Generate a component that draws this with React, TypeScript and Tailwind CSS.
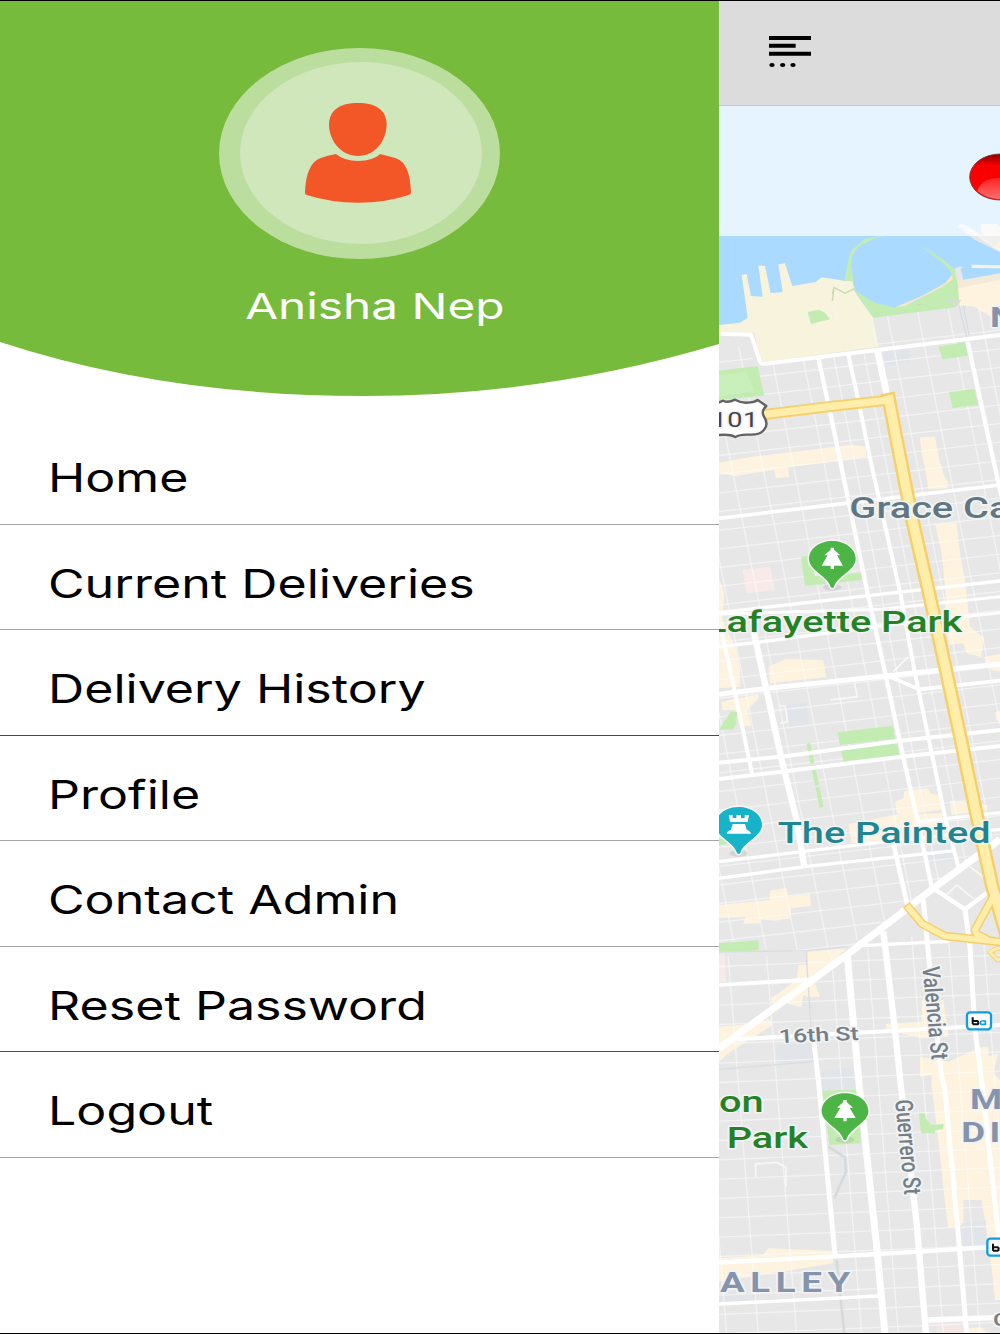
import React from "react";

const menuItems = [
  { name: "Home", row: "h-[106px] border-[#a6a6a6]" },
  { name: "Current Deliveries", row: "h-[105px] border-[#a6a6a6]" },
  { name: "Delivery History", row: "h-[106px] border-[#4a4a4a]" },
  { name: "Profile", row: "h-[105px] border-[#a6a6a6]" },
  { name: "Contact Admin", row: "h-[106px] border-[#a6a6a6]" },
  { name: "Reset Password", row: "h-[105px] border-[#4a4a4a]" },
  { name: "Logout", row: "h-[106px] border-[#a6a6a6]" },
];

// The map is drawn at 3 units per pixel.
const commercial = [
  "725,195 760,185 830,172 855,165 855,262 735,258",
  "765,252 855,255 855,280 830,292",
  "12,728 100,712 350,682 412,674 453,680 453,710 370,722 220,742 222,772 182,775 178,750 60,768 12,758",
  "615,652 660,650 672,715 685,760 700,790 698,805 640,808 630,740 620,700",
  "660,912 725,908 735,1000 750,1080 765,1220 808,1255 798,1312 755,1300 745,1270 700,1275 690,1100 680,1000",
  "808,1310 855,1302 855,1355 830,1350 812,1335",
  "840,1475 855,1472 855,1508 845,1500",
  "12,1075 28,1120 22,1200 65,1290 75,1350 75,1400 12,1405",
  "160,1340 210,1318 325,1320 333,1372 165,1390",
  "20,1445 132,1423 130,1435 98,1470 110,1518 75,1520 60,1470 22,1470",
  "540,1745 565,1735 568,1712 640,1705 645,1720 672,1725 678,1770 600,1780 590,1800 545,1780",
  "400,1812 540,1785 690,1778 690,1815 560,1860 410,1870",
  "705,1742 780,1750 818,1755 815,1770 710,1785",
  "12,2055 165,2040 165,2012 215,2003 218,2028 285,2022 288,2058 228,2065 228,2095 180,2102 135,2098 135,2110 85,2112 90,2090 12,2095",
  "278,2195 395,2185 310,2270 300,2290 315,2330 280,2332 265,2325 258,2362 215,2350 170,2350 168,2335 245,2280 250,2235 278,2235",
  "12,2420 75,2415 165,2398 172,2415 40,2500 12,2525",
  "620,2340 685,2340 700,2450 620,2455",
  "512,2412 620,2405 620,2455 515,2430",
  "615,2510 700,2525 800,2480 820,2480 820,2510 850,2500 835,2560 855,2580 855,3240 840,3240 825,3100 800,2940 745,2940 745,3015 700,3025 690,2950 670,2760 650,2600 650,2565 615,2570",
  "12,3115 145,3105 160,3085 350,3092 355,3130 12,3185",
  "760,3325 800,3322 820,3342 760,3342",
];

const parks = [
  "278,276 312,269 330,278 345,298 288,312",
  "12,452 128,438 148,527 12,540",
  "670,380 750,367 758,407 683,418",
  "702,516 778,506 790,555 713,564",
  "258,1010 285,1007 300,1068 438,1058 440,1080 270,1098",
  "48,1475 67,1475 64,1510 55,1528 12,1530 28,1503",
  "368,1537 533,1517 541,1556 375,1575",
  "378,1591 547,1570 554,1605 386,1624",
  "12,1855 35,1855 35,1872 12,1875",
  "12,2170 130,2161 132,2191 12,2197",
  "322,2612 437,2608 437,2770 343,2775",
  "612,2680 628,2680 635,2700 650,2715 686,2712 684,2728 660,2730 660,2740 618,2740",
];

const blocks = [
  { points: "82,1050 165,1040 180,1110 95,1120", fill: "#f9eaea" },
  { points: "12,2205 28,2200 33,2285 12,2287", fill: "#f9eaea" },
  { points: "665,3312 745,3308 745,3342 665,3342", fill: "#f5e6e6" },
  { points: "505,395 582,385 588,425 515,437", fill: "#e1e5e9" },
  { points: "215,1455 275,1448 282,1510 225,1525", fill: "#e1e5e9" },
  { points: "635,1880 710,1868 715,1920 645,1935", fill: "#e1e5e9" },
  { points: "182,2475 290,2468 297,2525 185,2530", fill: "#e1e5e9" },
  { points: "320,2550 425,2540 428,2608 320,2612", fill: "#e1e5e9" },
  { points: "740,3010 812,3000 815,3080 740,3085", fill: "#e1e5e9" },
  { points: "12,3220 128,3215 128,3240 12,3248", fill: "#e1e5e9" },
];

const streets = [
  { d: "M12 341L108 344L135 425Q138 433 150 431L855 345", w: 12 },
  { d: "M310 415L345 575L375 720L460 1130L513 1370L560 1590L605 1790L650 2000", w: 13 },
  { d: "M400 405L432 550L465 715L558 1130L600 1360L690 1790L730 1940", w: 12 },
  { d: "M487 390L517 530", w: 20 },
  { d: "M758 365L835 720L860 830", w: 13 },
  { d: "M12 895L390 850L855 795", w: 11 },
  { d: "M12 1178L460 1127L855 1083", w: 10 },
  { d: "M12 1182L500 1168L855 1130", w: 9 },
  { d: "M12 1280L120 1268L480 1220L855 1178", w: 10 },
  { d: "M12 1423L160 1405L510 1368L855 1332", w: 15 },
  { d: "M520 1368L612 1408L855 1382", w: 11 },
  { d: "M12 1628L200 1610L550 1563L855 1530", w: 12 },
  { d: "M12 1677L200 1655L560 1610L855 1578", w: 12 },
  { d: "M610 1805L855 1778", w: 10 },
  { d: "M12 1925L260 1895L540 1862L855 1828", w: 10 },
  { d: "M12 1975L270 1940L720 1892", w: 10 },
  { d: "M115 1230L150 1390L200 1620L245 1800L268 1940", w: 19 },
  { d: "M15 1215L50 1370L112 1665", w: 12 },
  { d: "M535 1870L578 2060", w: 14 },
  { d: "M12 2485L395 2205L560 2078L655 2005L855 1858", w: 21 },
  { d: "M655 2005L750 2068L830 2008", w: 13 },
  { d: "M750 2068L765 2180L780 2430L800 2580L852 3060", w: 15 },
  { d: "M625 2040L640 2200L680 2570L690 2610L732 3070L755 3342", w: 15 },
  { d: "M505 2135L540 2430L562 2640L605 3010L633 3342", w: 19 },
  { d: "M397 2210L432 2590L485 3080L510 3342", w: 21 },
  { d: "M297 2470L312 2600L360 3105", w: 15 },
  { d: "M440 2177L700 2164", w: 10 },
  { d: "M12 2295L285 2278", w: 11 },
  { d: "M60 2458L430 2438L855 2415", w: 12 },
  { d: "M12 3128L490 3102L855 3080", w: 13 },
  { d: "M12 3252L490 3228", w: 10 },
  { d: "M640 3300L855 3292", w: 16 },
];

const highways = [
  { d: "M145 584L340 560L522 540", w: 33 },
  { d: "M522 540L545 660L590 890L640 1110L695 1360L740 1570L790 1810L832 2000L870 2130", w: 43 },
  { d: "M835 2030L780 2130L785 2142L810 2155", w: 26 },
  { d: "M582 2064L622 2112L690 2148L860 2166", w: 26 },
  { d: "M855 2184L840 2188L824 2196L848 2220L858 2216", w: 14 },
];

const northRows = Array.from({ length: 38 }, (_, i) => 330 + i * 56);
const northColumns = Array.from({ length: 14 }, (_, i) => -420 + i * 93);
const southRows = Array.from({ length: 20 }, (_, i) => 2240 + i * 58);
const southColumns = [-60, 35, 150, 345, 455, 590, 700, 805];

interface MapLabelProps {
  x: number;
  y: number;
  text: string;
  fill: string;
  size?: number;
  weight?: number;
  angle?: number;
  spacing?: number;
  stretch?: number;
  anchor?: "start" | "end";
}

const MapLabel = ({
  x,
  y,
  text,
  fill,
  size = 91,
  weight = 500,
  angle = 0,
  spacing = 0,
  stretch = 1.31,
  anchor = "start",
}: MapLabelProps) => (
  <text
    transform={`translate(${x} ${y}) scale(${stretch} 1) rotate(${angle})`}
    fontFamily='Roboto, "Liberation Sans", sans-serif'
    fontSize={size}
    fontWeight={weight}
    letterSpacing={spacing}
    textAnchor={anchor}
    fill={fill}
    stroke="#f3f3f3"
    strokeWidth={9}
    strokeLinejoin="round"
    paintOrder="stroke"
  >
    {text}
  </text>
);

const MapPin = ({ x, y, color, children }: { x: number; y: number; color: string; children: React.ReactNode }) => (
  <g transform={`translate(${x} ${y})`}>
    <ellipse cx="0" cy="87" rx="28" ry="10" fill="#000" opacity="0.08" />
    <path
      d="M0 -52C39 -52 70 -28 70 1C70 37 14 52 5 86Q0 92 -5 86C-14 52 -70 37 -70 1C-70 -28 -39 -52 0 -52Z"
      fill={color}
      stroke="#f6f6f6"
      strokeWidth="9"
      paintOrder="stroke"
    />
    {children}
  </g>
);

const Tree = () => <path d="M-5 -32H5V-26L24 -9H14L32 22H5V32H-5V22H-32L-14 -9H-24L-5 -26Z" fill="#fff" />;

const Rook = () => (
  <path
    d="M-30 -28H-18V-19H-7V-28H7V-19H18V-28H31L27 -7H-26ZM-18 -1H19L24 16Q36 20 37 28H-36Q-34 19 -23 16Z"
    fill="#fff"
  />
);

const TransitStop = ({ x, y }: { x: number; y: number }) => (
  <g transform={`translate(${x} ${y})`}>
    <rect x="0" y="0" width="72" height="51" rx="9" fill="#fff" stroke="#0f9ee0" strokeWidth="7" />
    <path d="M17 15V36M17 26H30Q34 26 34 31Q34 36 30 36H17" fill="none" stroke="#111" strokeWidth="6" />
    <path d="M55 26H44Q40 26 40 31Q40 36 44 36H55V24" fill="none" stroke="#0f9ee0" strokeWidth="5" />
  </g>
);

const CityMap = () => (
  <svg className="block h-[1228px] w-[281px]" viewBox="12 -342 843 3684">
    <defs>
      <clipPath id="north">
        <path d="M12 335L135 432L480 395L475 285L855 255V1870L395 2205L12 2180Z" />
      </clipPath>
      <clipPath id="south">
        <path d="M12 2210L395 2205L655 2020L855 2150V3342H12Z" />
      </clipPath>
    </defs>
    <rect x="12" y="-342" width="843" height="3684" fill="#e7e7e7" />

    {commercial.map((points) => (
      <polygon key={points} points={points} fill="#fdf3df" />
    ))}
    {blocks.map((block) => (
      <polygon key={block.points} points={block.points} fill={block.fill} />
    ))}

    <g clipPath="url(#north)" stroke="#fff" strokeOpacity="0.5" strokeWidth="4">
      {northRows.map((y) => (
        <line key={y} x1="0" y1={y + 98} x2="860" y2={y} />
      ))}
      {northColumns.map((x) => (
        <line key={x} x1={x} y1="250" x2={x + 400} y2="2250" />
      ))}
    </g>
    <g clipPath="url(#south)" stroke="#fff" strokeOpacity="0.5" strokeWidth="4">
      {southRows.map((y) => (
        <line key={y} x1="0" y1={y} x2="860" y2={y - 35} />
      ))}
      {southColumns.map((x) => (
        <line key={x} x1={x} y1="2150" x2={x + 95} y2="3342" />
      ))}
    </g>

    {/* bay and waterfront */}
    <path
      d="M12 -342H855V96L800 55L738 12L728 20L780 60L855 96V165L745 181L735 138L718 148L725 230L480 290L12 330Z"
      fill="#aadaff"
    />
    <path d="M740 12L760 20L855 80V96L790 52L735 18Z" fill="#f2f2f2" />
    <path d="M798 12H845L855 22V92L800 48Z" fill="#efefef" />
    <path d="M832 82L855 62V94Z" fill="#fdf3df" />
    <path d="M770 134L855 136V145L785 144H770Z" fill="#f8f3e4" />
    <path d="M718 148L745 138L735 150L743 190L725 195Z" fill="#e7e7e7" />
    <path d="M728 182L855 160V180L728 205Z" fill="#f3ead8" />
    <path
      d="M12 315L75 308L98 293L80 165L95 162L108 228L143 230L130 137L150 137L167 219L203 216L190 133L210 130L232 198L302 186L320 172L388 182L413 184L420 215L440 245L470 285L490 380L150 425L135 422L118 338L12 335Z"
      fill="#f8f3dc"
    />
    <path d="M388 182L400 120L410 90L450 56L515 44L480 55L430 80L413 105L408 130L415 184Z" fill="#c3ecb2" />
    <path
      d="M613 74L690 122L718 146L728 190L733 250L720 262L475 293L420 215L413 185L425 215L480 248L540 263L600 245L690 190L712 165L700 145L685 130Z"
      fill="#c3ecb2"
    />
    <path d="M540 262L620 228L690 190L711 165L714 178L680 202L570 258Z" fill="#f7e8c6" />
    <path d="M352 243L357 202L390 220L418 206M352 222L357 202M606 256L618 252" fill="none" stroke="#c5dbb0" strokeWidth="4" />
    <path d="M470 290L486 380M355 255L370 300" fill="none" stroke="#f5f5ea" strokeWidth="7" />
    <path d="M695 240L735 242L722 255ZM732 258L755 350M745 255L762 345" fill="none" stroke="#d8dbdf" strokeWidth="4" />

    {parks.map((points) => (
      <polygon key={points} points={points} fill="#c3ecb2" />
    ))}
    <path d="M12 465L95 456L118 512L12 530Z" fill="#c9efba" />
    <path d="M280 1570L321 1767" stroke="#c3ecb2" strokeWidth="12" strokeDasharray="62 5" />

    <g fill="none" stroke="#f8f8f8" strokeWidth="5">
      <path d="M535 1355L580 1310M193 1458H210L218 1505L195 1510M418 1388L427 1430L345 1440M765 1940L830 1990M690 2030L725 1995L775 2035M122 2872V2832L185 2827L213 2842V2900" />
    </g>
    <path d="M12 2196L275 2192L395 2180M273 2195L295 2525M12 2548L297 2525" fill="none" stroke="#dadde0" strokeWidth="4" />
    <path d="M340 2780L390 2812L393 2855L358 2935M365 3120L388 3342" fill="none" stroke="#d7dadd" strokeWidth="8" />

    <g fill="none" stroke="#fff" strokeLinejoin="round">
      {streets.map((street) => (
        <path key={street.d} d={street.d} strokeWidth={street.w} />
      ))}
    </g>
    <g fill="none" stroke="#f6cf6b" strokeLinejoin="round" strokeLinecap="square">
      {highways.map((road) => (
        <path key={road.d} d={road.d} strokeWidth={road.w} />
      ))}
    </g>
    <g fill="none" stroke="#ffeeaa" strokeLinejoin="round" strokeLinecap="square">
      {highways.map((road) => (
        <path key={road.d} d={road.d} strokeWidth={road.w * 0.66} />
      ))}
    </g>

    {/* route shield */}
    <path
      d="M-20 552L12 547L25 542Q38 550 60 539Q80 550 100 548Q118 547 128 540L154 558Q138 572 146 588Q162 612 148 628Q136 645 105 644Q75 642 61 651Q45 642 12 645L-20 640Z"
      fill="#fff"
      stroke="#626262"
      strokeWidth="7"
      strokeLinejoin="round"
    />
    <MapLabel x={132} y={620} text="101" fill="#444" size={62} weight={400} spacing={1.5} anchor="end" />

    <MapLabel x={825} y={320} text="N" fill="#8494ad" size={84} weight={700} />
    <MapLabel x={403} y={895} text="Grace Ca" fill="#5f7784" />
    <MapLabel x={742} y={1235} text="Lafayette Park" fill="#248226" anchor="end" />
    <MapLabel x={188} y={1868} text="The Painted" fill="#1f8690" />
    <MapLabel x={193} y={2469} text="16th St" fill="#727f88" size={57} angle={-3} />
    <MapLabel x={622} y={2240} text="Valencia St" fill="#727f88" size={56} angle={85.7} />
    <MapLabel x={540} y={2640} text="Guerrero St" fill="#727f88" size={56} angle={85.7} />
    <MapLabel x={12} y={2677} text="on" fill="#248226" />
    <MapLabel x={35} y={2785} text="Park" fill="#248226" />
    <MapLabel x={765} y={2667} text="M" fill="#8494ad" size={84} weight={700} />
    <MapLabel x={739} y={2766} text="DI" fill="#8494ad" size={84} weight={700} spacing={10} />
    <MapLabel x={15} y={3215} text="ALLEY" fill="#8494ad" size={84} weight={700} spacing={13} />
    <MapLabel x={834} y={3317} text="C" fill="#727f88" size={56} />

    <MapPin x={352} y={1015} color="#4db446">
      <Tree />
    </MapPin>
    <MapPin x={390} y={2672} color="#4db446">
      <Tree />
    </MapPin>
    <MapPin x={71} y={1813} color="#16b3c9">
      <Rook />
    </MapPin>
    <TransitStop x={756} y={2377} />
    <TransitStop x={817} y={3056} />
  </svg>
);

const RedButton = () => (
  <svg className="mt-3 h-12 w-8" viewBox="0 0 96 144">
    <defs>
      <linearGradient id="gloss" x1="0" y1="0" x2="0" y2="1">
        <stop offset="0" stopColor="#ff2020" />
        <stop offset="1" stopColor="#ff7070" />
      </linearGradient>
      <linearGradient id="red" x1="0" y1="0" x2="0" y2="1">
        <stop offset="0" stopColor="#8c0000" />
        <stop offset="0.25" stopColor="#f80000" />
        <stop offset="1" stopColor="#ff0000" />
      </linearGradient>
    </defs>
    <ellipse cx="96" cy="72" rx="91" ry="69" fill="url(#red)" stroke="#7a3038" strokeWidth="2.5" />
    <path d="M28 114Q40 74 96 74V139Q55 137 28 114Z" fill="url(#gloss)" />
  </svg>
);

const UserIcon = () => (
  <svg className="mr-[5px] h-[100px] w-[106px]" viewBox="317 219 318 300">
    <path
      d="M476 219C530 219 562 240 562 285C560 335 525 378 476 378C427 378 390 335 389 285C389 240 422 219 476 219Z"
      fill="#f35627"
    />
    <path
      d="M410 372Q435 393 476 393Q520 393 543 372L590 385C620 395 633 430 635 488Q635 492 628 495Q560 518 476 518Q395 518 322 495Q317 493 317 488C319 430 335 395 362 385Q385 376 410 372Z"
      fill="#f35627"
    />
  </svg>
);

const Sidebar = () => (
  <aside className="flex w-[719px] shrink-0 flex-col bg-white">
    <header className="relative h-[418px] shrink-0">
      <svg className="absolute inset-0 h-[396px] w-[719px]" viewBox="0 1 719 396">
        <path d="M0 0H719V344Q545 396 364 396Q165 396 0 342Z" fill="#77bb3c" />
      </svg>
      <div className="relative flex flex-col items-center pt-[47px]">
        <div className="flex h-[211px] w-[281px] items-center justify-center rounded-[50%] bg-[#bbde9e]">
          <div className="mb-[2px] ml-[2px] flex h-[182px] w-[242px] items-center justify-center rounded-[50%] bg-[#d0e7bc]">
            <UserIcon />
          </div>
        </div>
        <p className="ml-[31px] mt-[23px] scale-x-[1.325] whitespace-nowrap text-[36px] leading-[48px] text-white">
          Anisha Nep
        </p>
      </div>
    </header>
    <nav>
      {menuItems.map((item) => (
        <div key={item.name} className={`flex items-center border-b pl-[48px] pt-[13px] ${item.row}`}>
          <span className="origin-left scale-x-[1.285] whitespace-nowrap text-[39px] leading-[48px] text-black">
            {item.name}
          </span>
        </div>
      ))}
    </nav>
  </aside>
);

export default function App() {
  return (
    <div className="flex h-[1334px] w-[1000px] overflow-hidden border-y border-black bg-white font-[Inter,'Liberation_Sans',sans-serif]">
      <Sidebar />
      <main className="flex w-[281px] shrink-0 flex-col">
        <div className="h-[105px] shrink-0 border-b border-[#c3c7ca] bg-[#dcdcdc] pl-[50px] pt-[34px]">
          <svg className="h-8 w-[42px]" viewBox="0 0 126 96">
            <path d="M0 3H126V15H0ZM0 26H80V38H0ZM0 50H126V62H0Z" />
            <ellipse cx="9" cy="90" rx="8" ry="6" />
            <ellipse cx="41" cy="90" rx="8" ry="6" />
            <ellipse cx="72" cy="90" rx="8" ry="6" />
          </svg>
        </div>
        <div className="relative">
          <CityMap />
          <div className="absolute inset-x-0 top-0 flex h-[130px] items-center justify-end bg-white/70">
            <RedButton />
          </div>
        </div>
      </main>
    </div>
  );
}
